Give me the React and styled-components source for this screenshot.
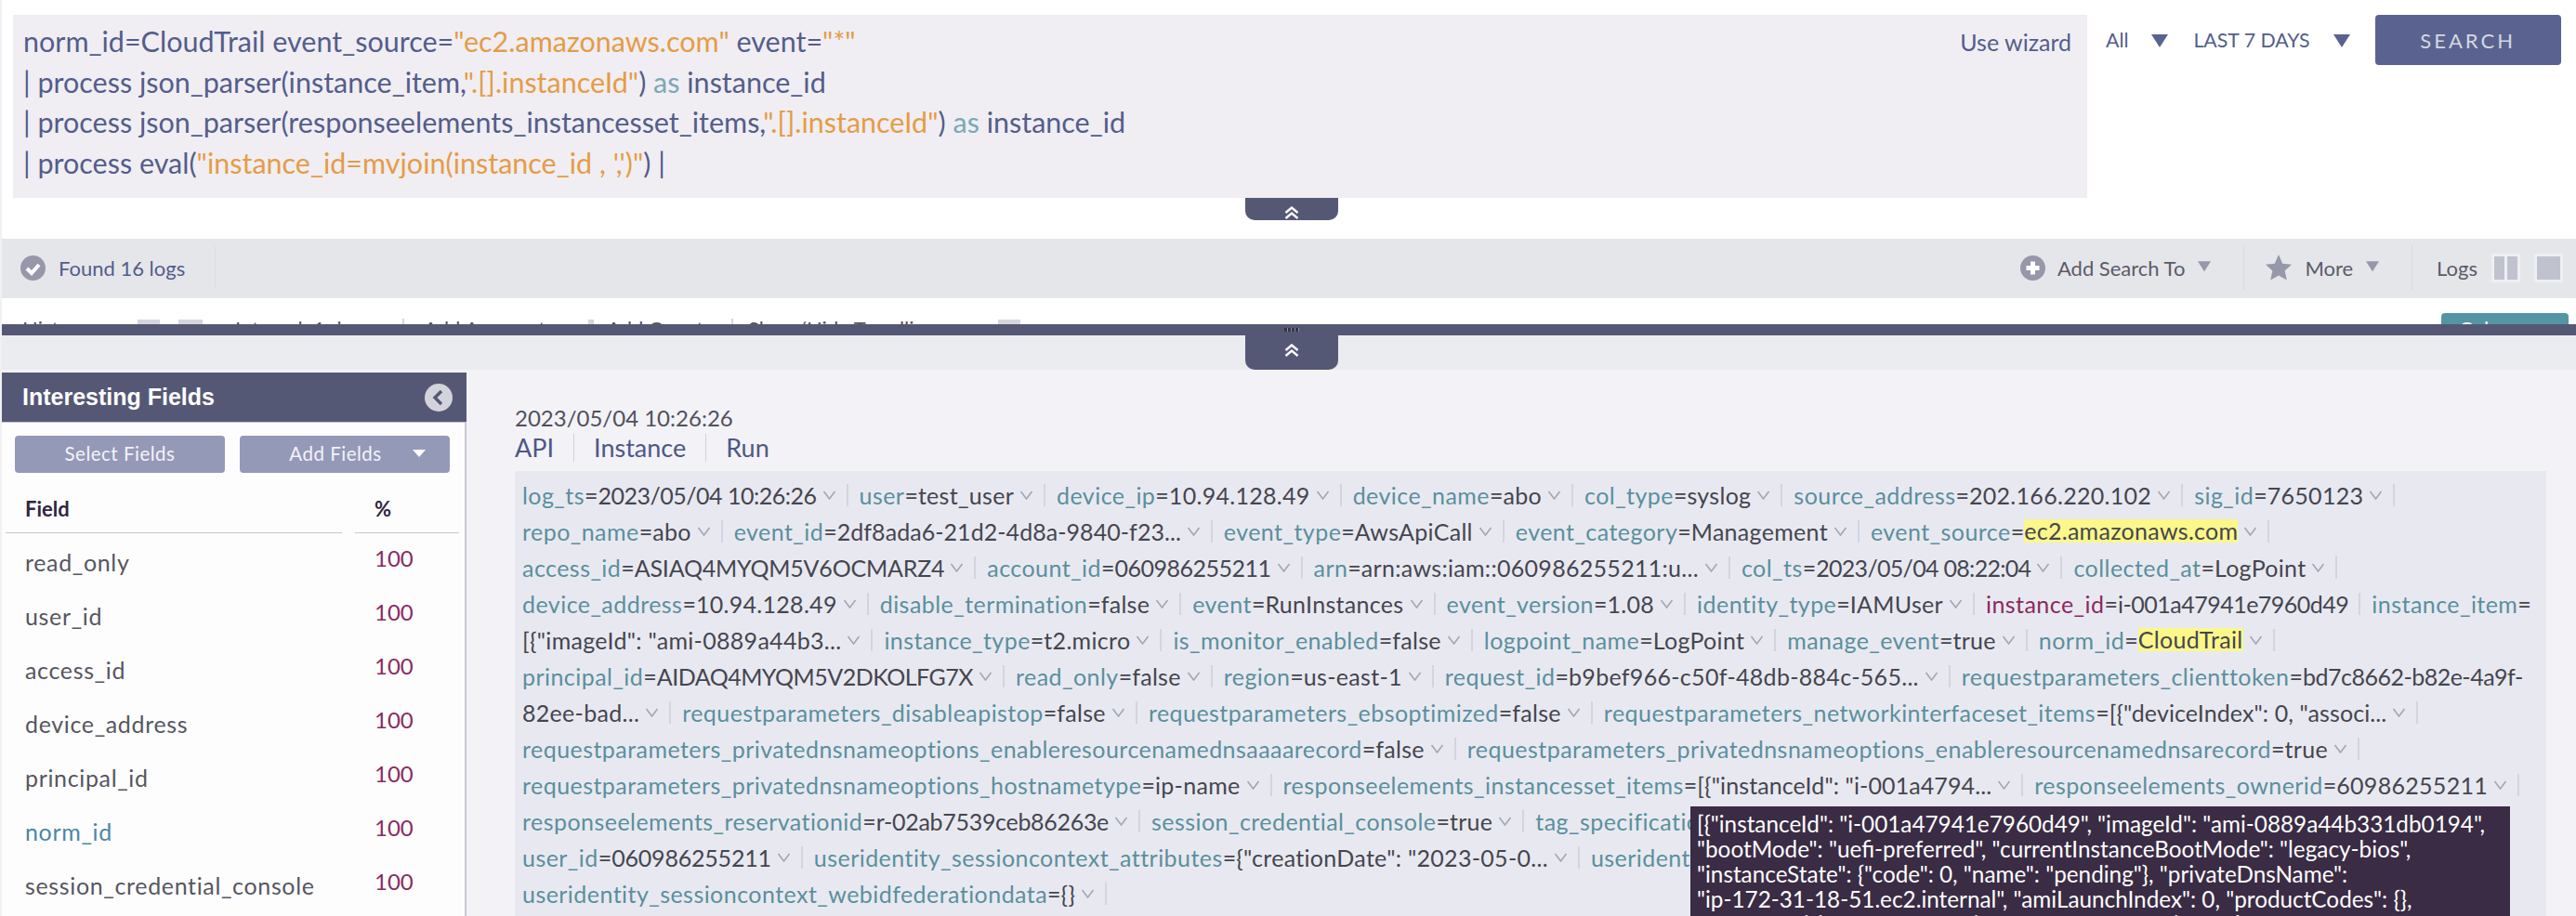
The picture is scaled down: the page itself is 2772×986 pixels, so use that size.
import React from "react";
import styled, { createGlobalStyle } from "styled-components";

const GlobalStyle = createGlobalStyle`
  html, body {
    margin: 0;
    padding: 0;
    background: #fff;
    overflow: hidden;
  }
  * { box-sizing: border-box; }
`;

const logRows = [
  [
    { name: "log_ts", value: "2023/05/04 10:26:26", ls: -0.5 },
    { name: "user", value: "test_user" },
    { name: "device_ip", value: "10.94.128.49" },
    { name: "device_name", value: "abo" },
    { name: "col_type", value: "syslog" },
    { name: "source_address", value: "202.166.220.102" },
    { name: "sig_id", value: "7650123" },
  ],
  [
    { name: "repo_name", value: "abo" },
    { name: "event_id", value: "2df8ada6-21d2-4d8a-9840-f23...", ls: 0.05 },
    { name: "event_type", value: "AwsApiCall" },
    { name: "event_category", value: "Management" },
    { name: "event_source", value: "ec2.amazonaws.com", mark: true },
  ],
  [
    { name: "access_id", value: "ASIAQ4MYQM5V6OCMARZ4", ls: -0.2 },
    { name: "account_id", value: "060986255211", ls: -0.5 },
    { name: "arn", value: "arn:aws:iam::060986255211:u..." },
    { name: "col_ts", value: "2023/05/04 08:22:04", ls: -0.7 },
    { name: "collected_at", value: "LogPoint" },
  ],
  [
    { name: "device_address", value: "10.94.128.49" },
    { name: "disable_termination", value: "false" },
    { name: "event", value: "RunInstances" },
    { name: "event_version", value: "1.08" },
    { name: "identity_type", value: "IAMUser" },
    { name: "instance_id", value: "i-001a47941e7960d49", alert: true, plain: true, ls: -0.5 },
    { name: "instance_item", value: "", plain: true, last: true },
  ],
  [
    { value: '[{"imageId": "ami-0889a44b3...' },
    { name: "instance_type", value: "t2.micro" },
    { name: "is_monitor_enabled", value: "false" },
    { name: "logpoint_name", value: "LogPoint" },
    { name: "manage_event", value: "true" },
    { name: "norm_id", value: "CloudTrail", mark: true },
  ],
  [
    { name: "principal_id", value: "AIDAQ4MYQM5V2DKOLFG7X", ls: -0.5 },
    { name: "read_only", value: "false" },
    { name: "region", value: "us-east-1" },
    { name: "request_id", value: "b9bef966-c50f-48db-884c-565..." },
    { name: "requestparameters_clienttoken", value: "bd7c8662-b82e-4a9f-", plain: true, last: true, ls: -0.5 },
  ],
  [
    { value: "82ee-bad..." },
    { name: "requestparameters_disableapistop", value: "false" },
    { name: "requestparameters_ebsoptimized", value: "false" },
    { name: "requestparameters_networkinterfaceset_items", value: '[{"deviceIndex": 0, "associ...', ls: 0.1 },
  ],
  [
    { name: "requestparameters_privatednsnameoptions_enableresourcenamednsaaaarecord", value: "false" },
    { name: "requestparameters_privatednsnameoptions_enableresourcenamednsarecord", value: "true" },
  ],
  [
    { name: "requestparameters_privatednsnameoptions_hostnametype", value: "ip-name" },
    { name: "responseelements_instancesset_items", value: '[{"instanceId": "i-001a4794...', ls: 0.1 },
    { name: "responseelements_ownerid", value: "60986255211" },
  ],
  [
    { name: "responseelements_reservationid", value: "r-02ab7539ceb86263e", ls: -0.3 },
    { name: "session_credential_console", value: "true" },
    { name: "tag_specification_set_items", value: "", plain: true, last: true },
  ],
  [
    { name: "user_id", value: "060986255211", ls: -0.2 },
    { name: "useridentity_sessioncontext_attributes", value: '{"creationDate": "2023-05-0...' },
    { name: "useridentity_sessioncontext_arn", value: "", plain: true, last: true },
  ],
  [{ name: "useridentity_sessioncontext_webidfederationdata", value: "{}" }],
];

const fields = [
  "read_only",
  "user_id",
  "access_id",
  "device_address",
  "principal_id",
  "norm_id",
  "session_credential_console",
];

const tooltipLines = [
  '[{"instanceId": "i-001a47941e7960d49", "imageId": "ami-0889a44b331db0194",',
  '"bootMode": "uefi-preferred", "currentInstanceBootMode": "legacy-bios",',
  '"instanceState": {"code": 0, "name": "pending"}, "privateDnsName":',
  '"ip-172-31-18-51.ec2.internal", "amiLaunchIndex": 0, "productCodes": {},',
  '"stateTransitionReason": "", "instanceType": "t2.micro", "keyName": "test",',
];

function Chevrons() {
  return (
    <svg width="16" height="14" viewBox="0 0 16 14" fill="none" stroke="#fff" strokeWidth="2.4">
      <polyline points="1.5,7 8,1.5 14.5,7" />
      <polyline points="1.5,13 8,7.5 14.5,13" />
    </svg>
  );
}

function Triangle({ color = "#5a6390", size = 20 }) {
  return (
    <svg width={size} height={size - 2} viewBox="0 0 20 18" fill={color}>
      <polygon points="1,3 19,3 10,17" />
    </svg>
  );
}

function LogItem({ item }) {
  return (
    <Item>
      {item.name && <FieldName $alert={item.alert}>{item.name}</FieldName>}
      {item.name && <Equals>=</Equals>}
      {item.mark ? <Marked>{item.value}</Marked> : <Value $spacing={item.ls}>{item.value}</Value>}
      {!item.plain && (
        <ItemChevron width="15" height="10" viewBox="0 0 15 10" fill="none" stroke="#a3a6b4" strokeWidth="1.6">
          <polyline points="1.5,1 7.5,9 13.5,1" />
        </ItemChevron>
      )}
      {!item.last && <ItemDivider />}
    </Item>
  );
}

export default function App() {
  return (
    <Page>
      <GlobalStyle />
      <QuerySection>
        <QueryRow>
          <Editor>
            <QueryLines>
              <QueryLine>
                norm_id=CloudTrail event_source=<Str>"ec2.amazonaws.com"</Str> event=<Str>"*"</Str>
              </QueryLine>
              <QueryLine>
                | process json_parser(instance_item,<Str>".[].instanceId"</Str>) <Keyword>as</Keyword> instance_id
              </QueryLine>
              <QueryLine>
                | process json_parser(responseelements_instancesset_items,<Str>".[].instanceId"</Str>){" "}
                <Keyword>as</Keyword> instance_id
              </QueryLine>
              <QueryLine>
                | process eval(<Str>"instance_id=mvjoin(instance_id , ',')"</Str>) |
              </QueryLine>
            </QueryLines>
            <Wizard>Use wizard</Wizard>
          </Editor>
          <Controls>
            <Picker>
              All <Triangle />
            </Picker>
            <Picker>
              LAST 7 DAYS <Triangle />
            </Picker>
            <SearchButton>SEARCH</SearchButton>
          </Controls>
        </QueryRow>
        <Handle>
          <Chevrons />
        </Handle>
      </QuerySection>

      <StatusBar>
        <StatusLeft>
          <svg width="27" height="27" viewBox="0 0 27 27">
            <circle cx="13.5" cy="13.5" r="13.5" fill="#9697a9" />
            <polyline points="7,14 12,19 20,10" fill="none" stroke="#fff" strokeWidth="4" />
          </svg>
          <Found>Found 16 logs</Found>
        </StatusLeft>
        <StatusRight>
          <ActionGroup>
            <svg width="27" height="27" viewBox="0 0 27 27">
              <circle cx="13.5" cy="13.5" r="13.5" fill="#9697a9" />
              <path d="M11 6.5h5v4.5h4.5v5H16v4.5h-5V16H6.5v-5H11z" fill="#fff" />
            </svg>
            <ActionText>Add Search To</ActionText>
            <ActionCaret>
              <Triangle color="#9697a9" size={16} />
            </ActionCaret>
          </ActionGroup>
          <ActionGroup>
            <svg width="30" height="30" viewBox="0 0 30 30">
              <polygon points="15,1 19.2,10.8 29,11.8 21.6,18.6 23.8,28.5 15,23.4 6.2,28.5 8.4,18.6 1,11.8 10.8,10.8" fill="#9697a9" />
            </svg>
            <ActionText>More</ActionText>
            <ActionCaret>
              <Triangle color="#9697a9" size={16} />
            </ActionCaret>
          </ActionGroup>
          <LogsGroup>
            <ActionText>Logs</ActionText>
            <ViewIcon>
              <ViewBar />
              <ViewBar />
            </ViewIcon>
            <ViewIcon>
              <ViewBar />
            </ViewIcon>
          </LogsGroup>
        </StatusRight>
      </StatusBar>

      <ToolRow>
        <ToolText $width={124}>Histogram</ToolText>
        <ToolIcon $width={24} $after={20} />
        <ToolIcon $width={26} $after={35} />
        <ToolText $width={180}>Interval: 1 day</ToolText>
        <ToolDivider $after={21} />
        <ToolText $width={177}>Add Aggregate</ToolText>
        <ToolIcon $width={6} $after={14} />
        <ToolText $width={134}>Add Count</ToolText>
        <ToolDivider $after={16} />
        <ToolText $width={269}>Show/Hide Trendline</ToolText>
        <ToolIcon $width={24} $after={0} />
        <ColumnsButton>Columns</ColumnsButton>
      </ToolRow>

      <DarkBar>
        <Grip />
      </DarkBar>
      <HandleStrip>
        <StripHandle>
          <Chevrons />
        </StripHandle>
      </HandleStrip>

      <Main>
        <Sidebar>
          <SidebarHeader>
            Interesting Fields
            <svg width="30" height="30" viewBox="0 0 30 30">
              <circle cx="15" cy="15" r="15" fill="#d3d4db" />
              <polyline points="18,8 11,15 18,22" fill="none" stroke="#555875" strokeWidth="3.4" />
            </svg>
          </SidebarHeader>
          <ButtonRow>
            <FieldButton>Select Fields</FieldButton>
            <FieldButton $menu>
              Add Fields
              <MenuCaret viewBox="0 0 14 8" fill="#fff">
                <polygon points="0,0 14,0 7,8" />
              </MenuCaret>
            </FieldButton>
          </ButtonRow>
          <FieldHead>
            <HeadName>Field</HeadName>
            <HeadPercent>%</HeadPercent>
          </FieldHead>
          {fields.map((field) => (
            <FieldRow key={field}>
              <FieldLabel $active={field === "norm_id"}>{field}</FieldLabel>
              <FieldPercent>100</FieldPercent>
            </FieldRow>
          ))}
        </Sidebar>

        <Detail>
          <Timestamp>2023/05/04 10:26:26</Timestamp>
          <Tags>
            <Tag>API</Tag>
            <Tag>Instance</Tag>
            <Tag>Run</Tag>
          </Tags>
          <LogBox>
            {logRows.map((row, index) => (
              <LogRow key={index}>
                {row.map((item, itemIndex) => (
                  <LogItem key={itemIndex} item={item} />
                ))}
              </LogRow>
            ))}
            <Tooltip>
              {tooltipLines.map((line) => (
                <div key={line}>{line}</div>
              ))}
            </Tooltip>
          </LogBox>
        </Detail>
      </Main>
    </Page>
  );
}

const Page = styled.div`
  width: 2772px;
  height: 986px;
  overflow: hidden;
  background: #fff;
  border-left: 2px solid #f1f1f4;
  font-family: Lato, "Liberation Sans", sans-serif;
`;

const QuerySection = styled.section`
  height: 257px;
  padding-top: 16px;
`;

const QueryRow = styled.div`
  display: flex;
  height: 197px;
`;

const Editor = styled.div`
  display: flex;
  justify-content: space-between;
  width: 2232px;
  margin-left: 12px;
  padding: 7px 17px 0 11px;
  background: #f0eef3;
`;

const QueryLines = styled.div`
  color: #545d8a;
  font-size: 30.5px;
`;

const QueryLine = styled.div`
  height: 43.6px;
  line-height: 43.6px;
  white-space: pre;
`;

const Str = styled.span`
  color: #e59c45;
`;

const Keyword = styled.span`
  color: #7ba9b4;
`;

const Wizard = styled.div`
  margin-top: 7px;
  color: #545d8a;
  font-size: 25px;
  line-height: 30px;
`;

const Controls = styled.div`
  display: flex;
  align-items: flex-start;
  padding-left: 20px;
`;

const Picker = styled.div`
  display: flex;
  align-items: center;
  gap: 24px;
  height: 54px;
  margin-right: 26px;
  color: #545d8a;
  font-size: 21.3px;
  white-space: nowrap;
`;

const SearchButton = styled.button`
  width: 200px;
  height: 54px;
  border: 0;
  border-radius: 4px;
  background: #5a6390;
  color: #d5d7e3;
  font-family: inherit;
  font-size: 22px;
  letter-spacing: 3px;
`;

const Handle = styled.div`
  display: flex;
  align-items: flex-end;
  justify-content: center;
  width: 100px;
  height: 24px;
  margin-left: 1338px;
  padding-bottom: 1px;
  border-radius: 0 0 10px 10px;
  background: #555875;
`;

const StatusBar = styled.div`
  display: flex;
  justify-content: space-between;
  height: 64px;
  padding-bottom: 2px;
  background: #e5e6ea;
`;

const StatusLeft = styled.div`
  display: flex;
  align-items: center;
  gap: 14px;
  width: 230px;
  padding-left: 20px;
  border-right: 1px solid #dcdde3;
  margin: 8px 0;
`;

const Found = styled.span`
  color: #545d8a;
  font-size: 22px;
  white-space: nowrap;
`;

const StatusRight = styled.div`
  display: flex;
  align-items: center;
  padding-right: 14px;
`;

const ActionGroup = styled.div`
  display: flex;
  align-items: center;
  gap: 13px;
  height: 48px;
  padding: 0 34px 0 22px;
  border-right: 1px solid #d8d9e0;
`;

const ActionCaret = styled.span`
  display: flex;
  margin-bottom: 5px;
`;

const ActionText = styled.span`
  color: #5b5b68;
  font-size: 22px;
  white-space: nowrap;
`;

const LogsGroup = styled.div`
  display: flex;
  align-items: center;
  gap: 15px;
  padding-left: 26px;
`;

const ViewIcon = styled.div`
  display: flex;
  gap: 3px;
  width: 31px;
  height: 31px;
  padding: 3px;
  background: #eeeff3;
`;

const ViewBar = styled.div`
  flex: 1;
  background: #c0c3cd;
`;

const ToolRow = styled.div`
  position: relative;
  display: flex;
  align-items: flex-start;
  height: 28px;
  padding: 20px 0 0 22px;
  overflow: hidden;
`;

const ToolText = styled.span`
  flex: 0 0 ${({ $width }) => $width}px;
  color: #555;
  font-size: 22px;
  line-height: 26px;
  white-space: nowrap;
`;

const ToolIcon = styled.span`
  flex: 0 0 ${({ $width }) => $width}px;
  height: 20px;
  margin: 3px ${({ $after }) => $after}px 0 0;
  background: #d4d6de;
`;

const ToolDivider = styled.span`
  flex: 0 0 2px;
  height: 20px;
  margin: 2px ${({ $after }) => $after}px 0 0;
  background: #d4d6de;
`;

const ColumnsButton = styled.div`
  position: absolute;
  top: 16px;
  right: 8px;
  width: 137px;
  height: 40px;
  padding: 3px 0 0 19px;
  border-radius: 4px;
  background: #5395a3;
  color: #fff;
  font-size: 22px;
`;

const DarkBar = styled.div`
  display: flex;
  align-items: center;
  height: 12px;
  padding-left: 1380px;
  background: #555875;
`;

const Grip = styled.div`
  width: 16px;
  height: 4px;
  background: repeating-linear-gradient(90deg, #35354a 0 3px, #8a8ca0 3px 4px);
`;

const HandleStrip = styled.div`
  height: 37px;
  background: #ebecf0;
`;

const StripHandle = styled(Handle)`
  height: 37px;
  align-items: center;
  padding-bottom: 6px;
`;

const Main = styled.main`
  display: flex;
  height: 588px;
  background: #f2f2f7;
`;

const Sidebar = styled.aside`
  flex: 0 0 500px;
  margin-top: 3px;
  background: #fdfdfe;
  border-right: 2px solid #c9cad4;
`;

const SidebarHeader = styled.div`
  display: flex;
  align-items: center;
  justify-content: space-between;
  height: 54px;
  margin-right: -2px;
  padding: 0 15px 0 22px;
  background: #555875;
  border-bottom: 1px solid #c4c5ce;
  color: #fff;
  font-family: "Liberation Sans", Arial, sans-serif;
  font-size: 25px;
  font-weight: 700;
`;

const ButtonRow = styled.div`
  display: flex;
  gap: 16px;
  padding: 14px 14px 0;
`;

const FieldButton = styled.button`
  position: relative;
  flex: 0 0 226px;
  height: 40px;
  padding: ${({ $menu }) => ($menu ? "0 20px 3px 0" : "0 0 3px")};
  border: 0;
  border-radius: 4px;
  background: #9599b8;
  color: #f3f3f7;
  font-family: inherit;
  font-size: 20.5px;
  letter-spacing: 0.5px;
`;

const MenuCaret = styled.svg`
  position: absolute;
  top: 15px;
  right: 26px;
  width: 14px;
  height: 8px;
`;

const FieldHead = styled.div`
  display: flex;
  margin: 15px 6px 0 4px;
  height: 50px;
  gap: 14px;
`;

const HeadName = styled.div`
  flex: 0 0 362px;
  padding: 10px 0 0 21px;
  border-bottom: 1px solid #c6c7d0;
  color: #30263e;
  font-size: 22px;
  font-weight: 700;
`;

const HeadPercent = styled(HeadName)`
  flex: 0 0 112px;
  padding-left: 21px;
`;

const FieldRow = styled.div`
  display: flex;
  justify-content: space-between;
  height: 58px;
  padding: 0 0 0 25px;
`;

const FieldLabel = styled.div`
  color: ${({ $active }) => ($active ? "#4c86a4" : "#56565f")};
  font-size: 25px;
  letter-spacing: 0.65px;
  line-height: 62px;
`;

const FieldPercent = styled.div`
  width: 97px;
  color: #8a2a5e;
  font-size: 24px;
  line-height: 54px;
`;

const Detail = styled.section`
  flex: 1;
  padding: 37px 0 0 52px;
`;

const Timestamp = styled.div`
  color: #50505c;
  font-size: 24px;
  line-height: 30px;
`;

const Tags = styled.div`
  display: flex;
  height: 30px;
  margin-top: 2px;
`;

const Tag = styled.span`
  padding: 0 21px;
  border-right: 1px solid #cfd1db;
  color: #4f5785;
  font-size: 27px;
  line-height: 30px;
  &:first-child { padding-left: 0; }
  &:last-child { border-right: 0; }
`;

const LogBox = styled.div`
  position: relative;
  width: 2186px;
  height: 480px;
  margin-top: 10px;
  padding: 6px 0 0 8px;
  background: #e8e9f0;
`;

const LogRow = styled.div`
  display: flex;
  align-items: center;
  height: 39px;
  white-space: nowrap;
`;

const Item = styled.span`
  display: flex;
  align-items: center;
  color: #45454f;
  font-size: 25px;
`;

const FieldName = styled.span`
  color: ${({ $alert }) => ($alert ? "#8a2a5e" : "#5b8f9e")};
  letter-spacing: 0.45px;
`;

const Equals = styled.span`
  color: #45454f;
`;

const Value = styled.span`
  letter-spacing: ${({ $spacing = 0.3 }) => $spacing}px;
`;

const Marked = styled.span`
  background: #fbf78a;
  letter-spacing: 0.3px;
  line-height: 25px;
`;

const ItemChevron = styled.svg`
  margin-left: 6px;
`;

const ItemDivider = styled.span`
  width: 2px;
  height: 24px;
  margin: 0 12px 0 11px;
  background: #d3d5de;
`;

const Tooltip = styled.div`
  position: absolute;
  top: 361px;
  left: 1265px;
  width: 882px;
  height: 160px;
  padding: 5px 0 0 7px;
  background: #3a2c45;
  color: #fff;
  font-size: 24.3px;
  line-height: 27px;
  white-space: nowrap;
`;
